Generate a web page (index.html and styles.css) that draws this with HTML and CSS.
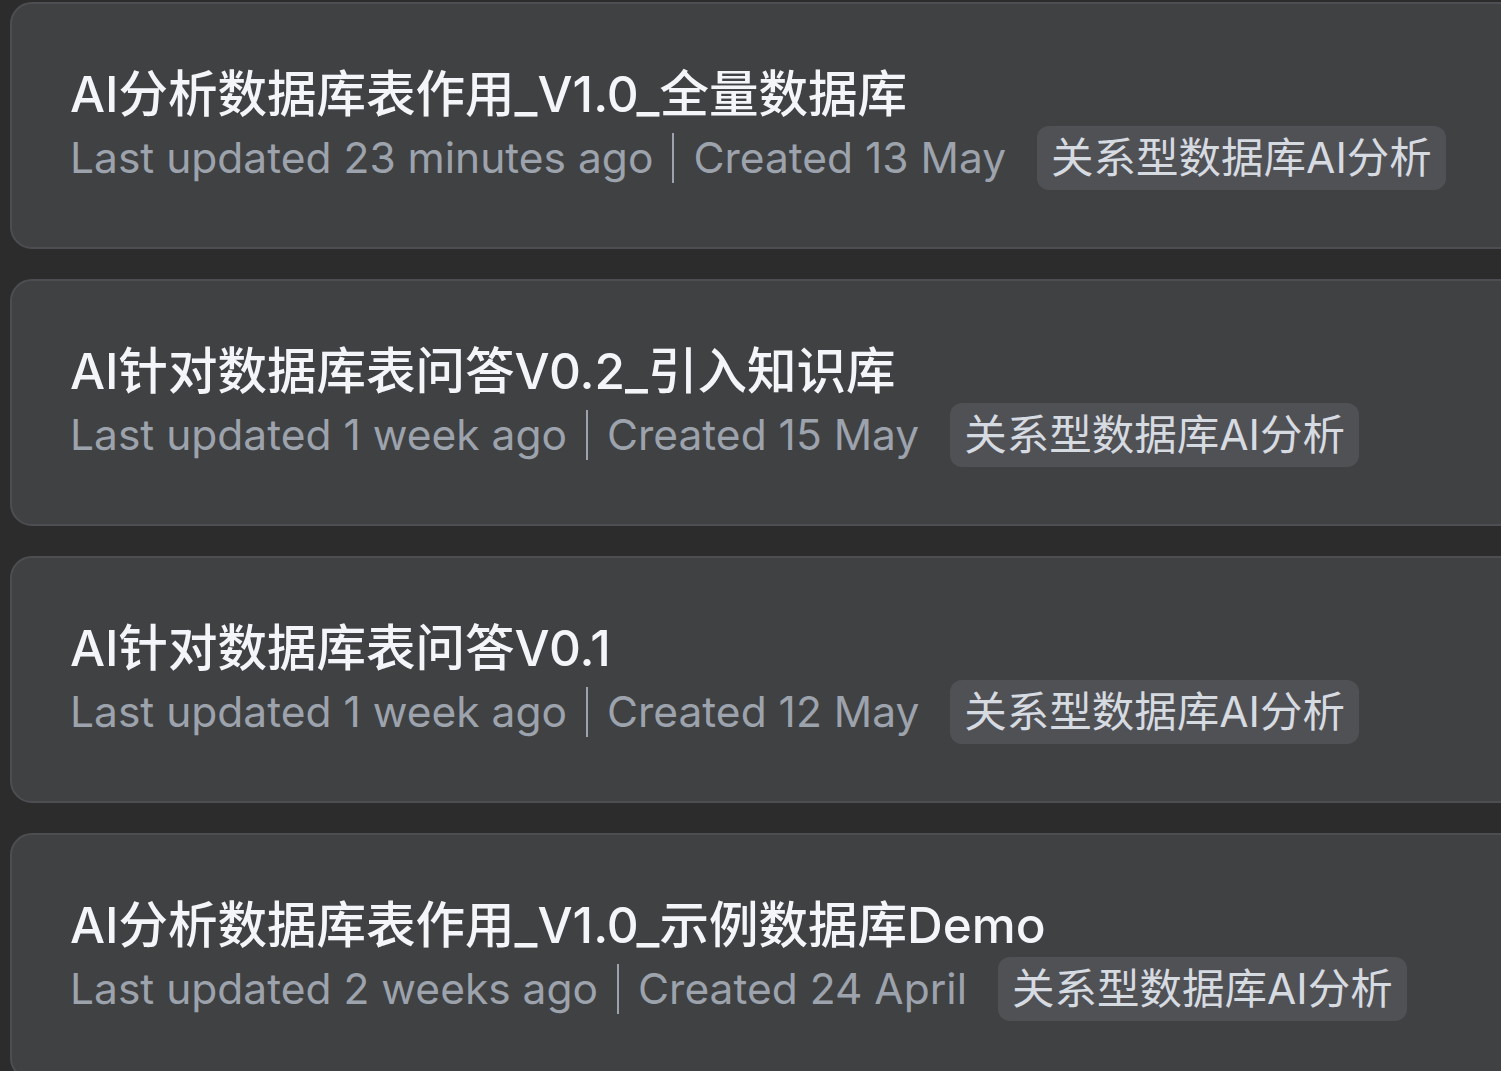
FILE: index.html
```html
<!DOCTYPE html>
<html lang="zh-CN">
<head>
<meta charset="utf-8">
<title>Projects</title>
<link rel="stylesheet" href="styles.css">
</head>
<body>
<div class="list">
  <div class="card">
    <div class="title">AI分析数据库表作用_V1.0_全量数据库</div>
    <div class="meta">
      <span class="meta-text">Last updated 23 minutes ago</span>
      <span class="sep"></span>
      <span class="meta-text">Created 13 May</span>
      <span class="tag">关系型数据库AI分析</span>
    </div>
  </div>
  <div class="card">
    <div class="title">AI针对数据库表问答V0.2_引入知识库</div>
    <div class="meta">
      <span class="meta-text">Last updated 1 week ago</span>
      <span class="sep"></span>
      <span class="meta-text">Created 15 May</span>
      <span class="tag">关系型数据库AI分析</span>
    </div>
  </div>
  <div class="card">
    <div class="title">AI针对数据库表问答V0.1</div>
    <div class="meta">
      <span class="meta-text">Last updated 1 week ago</span>
      <span class="sep"></span>
      <span class="meta-text">Created 12 May</span>
      <span class="tag">关系型数据库AI分析</span>
    </div>
  </div>
  <div class="card">
    <div class="title">AI分析数据库表作用_V1.0_示例数据库Demo</div>
    <div class="meta">
      <span class="meta-text">Last updated 2 weeks ago</span>
      <span class="sep"></span>
      <span class="meta-text">Created 24 April</span>
      <span class="tag">关系型数据库AI分析</span>
    </div>
  </div>
</div>
</body>
</html>
```
FILE: styles.css
```css
html, body {
  margin: 0;
  padding: 0;
  background: #2c2c2d;
  overflow: hidden;
  height: 100%;
}
body {
  font-family: Inter, "Noto Sans CJK SC", sans-serif;
}
.list {
  display: flex;
  flex-direction: column;
  gap: 30px;
  padding: 2px 0 0 10px;
  width: 1600px;
}
.card {
  box-sizing: border-box;
  height: 247px;
  background: #404143;
  border: 2px solid #4d4e51;
  border-radius: 22px;
  padding: 0 58px;
  display: flex;
  flex-direction: column;
  justify-content: center;
}
.title {
  color: #f3f5f9;
  font-size: 49.5px;
  font-weight: 500;
  line-height: 64px;
  white-space: nowrap;
}
.meta {
  display: flex;
  align-items: center;
  height: 64px;
  white-space: nowrap;
}
.meta-text {
  color: #9da3ad;
  font-size: 42.5px;
  line-height: 64px;
}
.sep {
  width: 2px;
  height: 50px;
  background: #9da3ad;
  margin: 0 19px;
}
.tag {
  margin-left: 31px;
  height: 64px;
  box-sizing: border-box;
  padding: 0 14px;
  background: #505154;
  border-radius: 12px;
  color: #d6dae1;
  font-size: 42.5px;
  line-height: 64px;
}
```
